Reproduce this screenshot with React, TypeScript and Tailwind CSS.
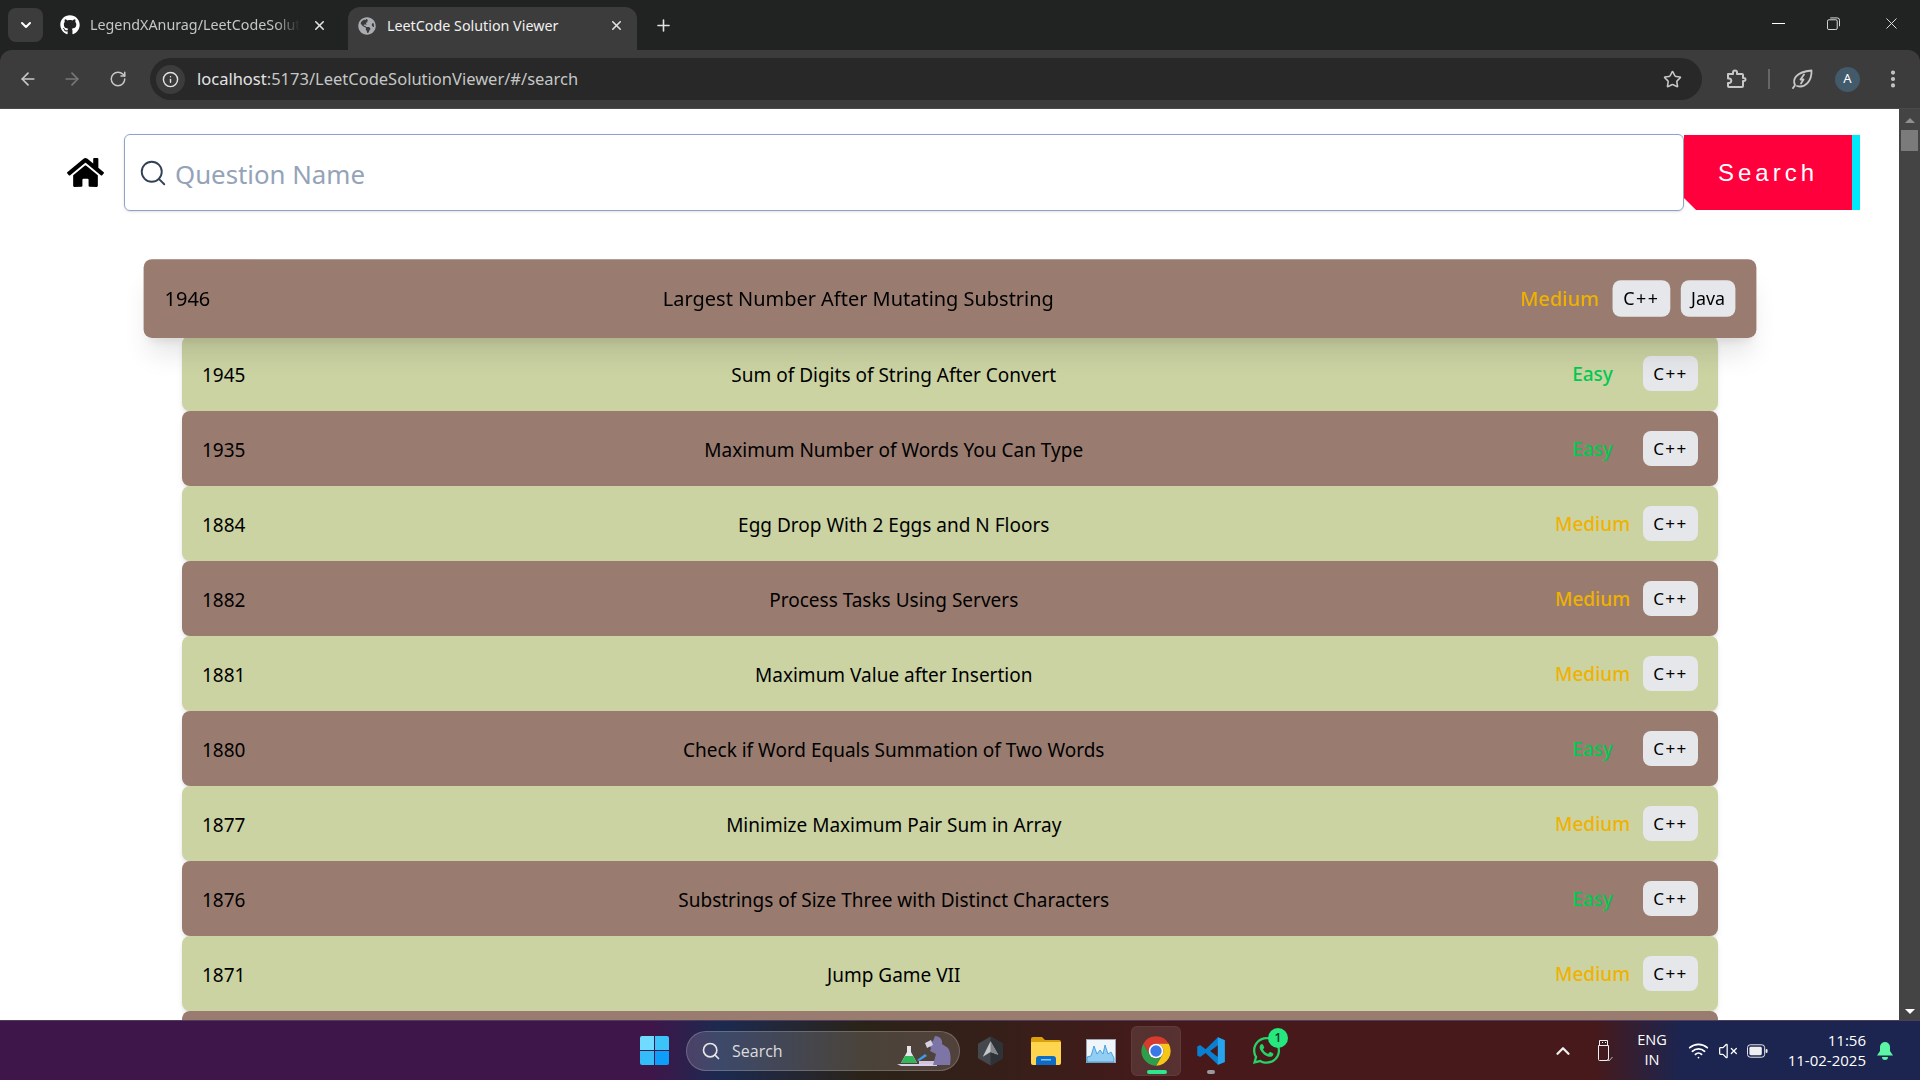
import { FaGithub, FaGlobeAmericas, FaHome, FaWhatsapp } from "react-icons/fa";
import { ArrowLeft, ArrowRight, ChevronDown, ChevronUp, Info, MoreVertical, Plus, RotateCw, Search, Star, VolumeX, Wifi, X } from "lucide-react";

const questions = [
  { id: "1945", title: "Sum of Digits of String After Convert", level: "Easy" },
  { id: "1935", title: "Maximum Number of Words You Can Type", level: "Easy" },
  { id: "1884", title: "Egg Drop With 2 Eggs and N Floors", level: "Medium" },
  { id: "1882", title: "Process Tasks Using Servers", level: "Medium" },
  { id: "1881", title: "Maximum Value after Insertion", level: "Medium" },
  { id: "1880", title: "Check if Word Equals Summation of Two Words", level: "Easy" },
  { id: "1877", title: "Minimize Maximum Pair Sum in Array", level: "Medium" },
  { id: "1876", title: "Substrings of Size Three with Distinct Characters", level: "Easy" },
  { id: "1871", title: "Jump Game VII", level: "Medium" },
];

function CppButton() {
  return (
    <span className="flex h-[35px] w-[55px] items-center justify-center rounded-lg bg-gray-200 text-[17px] tracking-[1.5px] text-black">
      C++
    </span>
  );
}

function JavaButton() {
  return (
    <span className="flex h-[35px] w-[52px] items-center justify-center rounded-lg bg-gray-200 text-[17px] text-black">
      Java
    </span>
  );
}

function Level({ level }: { level: string }) {
  return (
    <span className={`w-[75px] pt-[2px] text-center font-medium ${level === "Easy" ? "text-green-500" : "text-yellow-500"}`}>
      {level}
    </span>
  );
}

function Tabs() {
  return (
    <div className="flex h-[50px] shrink-0 items-end bg-[#212322] text-[14.3px]">
      <div className="mb-[8px] ml-[8px] flex h-[34px] w-[35px] items-center justify-center rounded-lg bg-[#3c3c3c] text-white">
        <ChevronDown size={16} strokeWidth={3} />
      </div>
      <div className="mb-[7px] ml-[17px] flex h-[36px] w-[288px] items-center">
        <FaGithub size={20} className="text-white" />
        <span className="ml-[10px] w-[210px] whitespace-nowrap text-[#c4c7c5] [mask-image:linear-gradient(90deg,#000_88%,transparent)]">LegendXAnurag/LeetCodeSolut</span>
        <X size={15} strokeWidth={2.5} className="ml-[12px] text-[#e3e3e3]" />
      </div>
      <div className="flex h-[43px] w-[289px] items-center rounded-t-xl bg-[#3c3c3c] pb-[6px] pl-[10px]">
        <FaGlobeAmericas size={18} className="text-[#a9adb2]" />
        <span className="ml-[11px] w-[222px] text-[#f0f0f0]">LeetCode Solution Viewer</span>
        <X size={15} strokeWidth={2.5} className="text-[#e3e3e3]" />
      </div>
      <Plus size={19} strokeWidth={2} className="mb-[15px] ml-[17px] text-[#e3e3e3]" />
      <div className="mb-[17px] ml-auto flex items-center pr-[19px] text-[#e8e8e8]">
        <div className="h-px w-[13px] bg-white" />
        <svg viewBox="0 0 14 14" className="ml-[42px] h-[13px] w-[13px]" fill="none" stroke="currentColor" strokeWidth="1">
          <rect x="0.5" y="3" width="10.5" height="10.5" rx="1.5" />
          <path d="M3.5 1h7.5a2.5 2.5 0 0 1 2.5 2.5V10" />
        </svg>
        <X size={19} strokeWidth={1.2} className="ml-[42px]" />
      </div>
    </div>
  );
}

function Toolbar() {
  return (
    <div className="h-[59px] shrink-0 bg-[#212322]">
      <div className="flex h-[59px] items-center rounded-t-xl border-b border-[#4a4a4a] bg-[#3c3c3c] text-[#c7c7c7]">
        <ArrowLeft size={20} className="ml-[18px]" />
        <ArrowRight size={20} className="ml-[24px] text-[#777777]" />
        <RotateCw size={18} className="ml-[27px]" />
        <div className="ml-[23px] flex h-[42px] w-[1552px] items-center rounded-full bg-[#282828] pl-[6px]">
          <div className="flex h-[29px] w-[29px] items-center justify-center rounded-full bg-[#3c3c3c] text-[#e3e3e3]">
            <Info size={17} />
          </div>
          <span className="ml-[12px] text-[16.5px] text-[#e3e3e3]">
            localhost<span className="text-[#c4c7c5]">:5173/LeetCodeSolutionViewer/#/search</span>
          </span>
          <Star size={19} strokeWidth={2} className="ml-auto mr-[20px]" />
        </div>
        <svg viewBox="0 0 24 24" className="ml-[22px] h-[24px] w-[24px]" fill="none" stroke="currentColor" strokeWidth="2" strokeLinejoin="round">
          <path d="M4 7h5V5.5a2 2 0 0 1 4 0V7h5a1 1 0 0 1 1 1v3h1a1.500 1.500 0 0 1 0 3h-1v5a1 1 0 0 1-1 1H5a1 1 0 0 1-1-1v-3h1.500a2.300 2.300 0 0 0 0-4.500H4z" />
        </svg>
        <div className="ml-[20px] h-[20px] w-[2px] bg-[#666666]" />
        <svg viewBox="0 0 24 24" className="ml-[20px] h-[24px] w-[24px]" fill="none" stroke="currentColor" strokeWidth="1.800" strokeLinejoin="round" strokeLinecap="round">
          <path d="M3 21c1-1 1.500-2 2-3C2.500 13 5 5 21.500 3.500 22 14 15 21.500 7 19" />
          <path d="M14 7.500l-3.500 5h3l-2.500 4" />
        </svg>
        <div className="ml-[21px] flex h-[25px] w-[25px] items-center justify-center rounded-full bg-[#435a6b] text-[13px] text-white">A</div>
        <MoreVertical size={22} strokeWidth={2.500} className="ml-[22px]" />
      </div>
    </div>
  );
}

function Scrollbar() {
  return (
    <div className="flex w-[21px] shrink-0 flex-col items-center bg-[#444444]">
      <div className="mt-[9px] h-0 w-0 border-x-[5px] border-b-[5px] border-x-transparent border-b-[#8f8f8f]" />
      <div className="mt-[7px] h-[21px] w-[17px] bg-[#7b7b7b]" />
      <div className="mb-[6px] mt-auto h-0 w-0 border-x-[5px] border-t-[5px] border-x-transparent border-t-white" />
    </div>
  );
}

function Taskbar() {
  return (
    <div className="flex h-[60px] shrink-0 items-center border-t border-[#4d3f5c] bg-[linear-gradient(90deg,#3e164a_0%,#3e164a_34%,#1c2a50_37.500%,#2b2318_45%,#47191a_62%,#47191a_83%,#1c2550_87.500%,#1c2550_100%)] font-['Open_Sans',sans-serif] text-white">
      {/* windows logo */}
      <div className="ml-[640px] grid h-[29px] w-[29px] grid-cols-2 gap-[1px]">
        <div className="rounded-tl-[2px] bg-[#6fdcff]" />
        <div className="rounded-tr-[2px] bg-[#3cc4f8]" />
        <div className="rounded-bl-[2px] bg-[#34bdf8]" />
        <div className="rounded-br-[2px] bg-[#0f9dfa]" />
      </div>
      {/* search pill */}
      <div className="ml-[17px] flex h-[40px] w-[274px] items-center overflow-hidden rounded-full border border-white/20 bg-white/15 pl-[14px]">
        <Search size={20} strokeWidth={2} className="text-[#e6e6e6]" />
        <span className="ml-[11px] text-[16px] text-[#dcdcdc]">Search</span>
        <svg viewBox="0 0 62 32" className="ml-auto mr-[2px] h-[32px] w-[62px]">
          <path d="M2 29h40v2H6z" fill="#d8d0e4" />
          <path d="M12 11h4v6l6 11H6l6-11z" fill="#e5e7eb" />
          <path d="M10 21h8l4 7H6z" fill="#31b85a" />
          <path d="M22 25l8-6 2 2-8 5z" fill="#3a9ee8" />
          <path d="M24 26h18v3H24z" fill="#cfc6dc" />
          <path d="M40 1c5 0 8 4 7 8l6 4c3 4 3 12 2 17H38l3-11-6-3 1-3-3-4 5-3z" fill="#7d75a6" />
          <path d="M30 8l6-3 2 5-6 3z" fill="#d6d0e2" />
        </svg>
      </div>
      {/* hex app */}
      <svg viewBox="0 0 28 30" className="ml-[17px] h-[30px] w-[27px]">
        <path d="M14 0l13 7.500v15L14 30 1 22.500v-15z" fill="#44474c" />
        <path d="M14 0l13 7.500v15L14 30z" fill="#2f3236" />
        <path d="M14 5l8 14-8-3-8 5z" fill="#c4c8cd" />
        <path d="M14 5l8 14-8-3z" fill="#85878c" />
      </svg>
      {/* explorer */}
      <svg viewBox="0 0 30 28" className="ml-[27px] h-[28px] w-[30px]">
        <path d="M0 2a2 2 0 0 1 2-2h9l3 3h14a2 2 0 0 1 2 2v3H0z" fill="#dba10c" />
        <path d="M0 5h30v21a2 2 0 0 1-2 2H2a2 2 0 0 1-2-2z" fill="#ffd44f" />
        <path d="M5 22a3 3 0 0 1 3-3h14a3 3 0 0 1 3 3v6H5z" fill="#0f6cc4" />
        <path d="M10 22h10v1.500H10z" fill="#7cc7f5" />
      </svg>
      {/* task monitor */}
      <svg viewBox="0 0 30 24" className="ml-[25px] h-[24px] w-[30px]">
        <rect width="30" height="24" fill="#9aa5ad" />
        <rect x="1" y="1" width="28" height="22" fill="#eef6fb" />
        <path d="M1 18l4-1 3-10 3 8 3-4 3 4 2-9 3 9 3-2 3 6v4H1z" fill="#93cdf2" stroke="#2f93d8" strokeWidth="0.800" />
      </svg>
      {/* chrome */}
      <div className="relative ml-[15px] flex h-[50px] w-[50px] items-center justify-center rounded-md border border-white/5 bg-white/10">
        <svg viewBox="0 0 48 48" className="h-[32px] w-[32px]">
          <path d="M24 2A22 22 0 0 1 43.050 13H24A11 11 0 0 0 14.470 29.500L4.950 13A22 22 0 0 1 24 2z" fill="#d93a2e" />
          <path d="M43.050 13A22 22 0 0 1 24 46l9.530-16.500A11 11 0 0 0 24 13z" fill="#f5c518" />
          <path d="M4.950 13l9.520 16.500a11 11 0 0 0 19.060 0L24 46A22 22 0 0 1 4.950 13z" fill="#2f9e4a" />
          <circle cx="24" cy="24" r="11" fill="#fff" />
          <circle cx="24" cy="24" r="8.500" fill="#3b78e7" />
        </svg>
        <div className="absolute bottom-[1px] left-[15px] h-[4px] w-[20px] rounded-full bg-[#2ee68c]" />
      </div>
      {/* vscode */}
      <div className="relative ml-[15px] h-[30px] w-[30px]">
        <svg viewBox="0 0 24 24" className="h-[30px] w-[30px]">
          <path fillRule="evenodd" d="M17.500 1 7.700 10.500 3.300 7.200 1 8.400v7.200l2.300 1.200 4.400-3.300 9.800 9.500 5.500-2.300V3.300zM17.500 7.300 11.300 12l6.200 4.700z" fill="#0a7fd0" />
          <path fillRule="evenodd" d="M17.500 1l5.500 2.300v17.400L17.500 23z" fill="#27a4ee" />
        </svg>
        <div className="absolute left-[11px] top-[34px] h-[4px] w-[8px] rounded-full bg-[#9a9a9a]" />
      </div>
      {/* whatsapp */}
      <div className="relative ml-[25px] h-[31px] w-[31px]">
        <FaWhatsapp size={31} className="text-[#25d366]" />
        <div className="absolute -right-[6px] -top-[7px] flex h-[20px] w-[20px] items-center justify-center rounded-full bg-[#25e87e] text-[12px] font-semibold text-[#10331f]">1</div>
      </div>
      {/* tray */}
      <ChevronUp size={22} strokeWidth={2.500} className="ml-[270px] text-[#f0f0f0]" />
      <svg viewBox="0 0 16 22" className="ml-[23px] h-[22px] w-[16px]" fill="none" stroke="#f0f0f0" strokeWidth="1">
        <path d="M2.500 0.500h8v5h-8zM1.500 5.500h10v14a1 1 0 0 1-1 1h-8a1 1 0 0 1-1-1zM5 2.500h1M8 2.500h1" />
        <path d="M10 19l2 2 3.500-4" stroke="#b8b8b8" />
      </svg>
      <div className="-mt-[2px] ml-[19px] flex w-[40px] flex-col items-center text-[14.500px] leading-[20px]">
        <span>ENG</span>
        <span>IN</span>
      </div>
      <Wifi size={21} strokeWidth={2} className="ml-[16px]" />
      <VolumeX size={20} strokeWidth={1.500} className="ml-[9px]" />
      <svg viewBox="0 0 22 14" className="ml-[9px] h-[14px] w-[21px]" fill="none">
        <rect x="0.500" y="0.500" width="18" height="13" rx="3" stroke="#f0f0f0" />
        <rect x="2.500" y="2.500" width="13" height="9" rx="1.500" fill="#f0f0f0" />
        <rect x="19.500" y="5" width="2" height="4" rx="1" fill="#f0f0f0" />
      </svg>
      <div className="-mt-[2px] ml-auto flex flex-col items-end text-[15px] leading-[20px]">
        <span>11:56</span>
        <span>11-02-2025</span>
      </div>
      <svg viewBox="0 0 16 18" className="ml-[11px] mr-[27px] h-[18px] w-[16px]" fill="#5cf5a5">
        <path d="M8 0a5 5 0 0 1 5 5v4l3 4.500H0L3 9V5a5 5 0 0 1 5-5z" />
        <path d="M5 15h6a3 3 0 0 1-6 0z" />
      </svg>
    </div>
  );
}

export default function App() {
  return (
    <div className="flex h-screen flex-col overflow-hidden bg-white font-['Noto_Sans',sans-serif]">
      <Tabs />
      <Toolbar />
      <div className="flex min-h-0 flex-1">
        <div className="min-w-0 flex-1 overflow-hidden">
          <div className="flex items-center pl-[67px] pr-[39px] pt-[25px]">
            <FaHome size={37} className="shrink-0 text-black" />
            <div className="ml-[20px] flex h-[77px] flex-1 items-center rounded-md border border-[#8fa3c4] pl-[13px] shadow-sm">
              <Search size={30} strokeWidth={1.500} className="text-[#334155]" />
              <span className="ml-[7px] pt-[3px] text-[25.800px] text-[#94a3b8]">Question Name</span>
            </div>
            <div className="flex h-[75px] w-[176px] shrink-0 items-center justify-center border-r-[8px] border-[#00e9fb] bg-[#ff003c] font-['Liberation_Sans',sans-serif] text-2xl tracking-[4px] text-white [clip-path:polygon(0_0,100%_0,100%_100%,12px_100%,0_calc(100%-12px))]">
              Search
            </div>
          </div>

          <div className="mt-[50px] flex flex-col pl-[182px] pr-[181px] text-[19px] text-black">
            <div className="relative z-10 flex h-[75px] scale-105 items-center justify-between rounded-lg bg-[#997c6f] px-[20px] shadow-xl">
              <span className="pt-[2px]">1946</span>
              <span className="pt-[2px]">Largest Number After Mutating Substring</span>
              <div className="flex items-center gap-[13px] pl-[13px]">
                <Level level="Medium" />
                <div className="flex gap-[10px]">
                  <CppButton />
                  <JavaButton />
                </div>
              </div>
            </div>
            {questions.map((q, i) => (
              <div
                key={q.id}
                className={`flex h-[75px] shrink-0 items-center justify-between rounded-lg px-[20px] shadow-md ${i % 2 === 0 ? "bg-[#cbd3a3]" : "bg-[#997c6f]"}`}
              >
                <span className="pt-[3px]">{q.id}</span>
                <span className="pt-[3px]">{q.title}</span>
                <div className="flex items-center gap-[13px] pl-[13px]">
                  <Level level={q.level} />
                  <CppButton />
                </div>
              </div>
            ))}
            <div className="h-[75px] shrink-0 rounded-lg bg-[#997c6f]" />
          </div>
        </div>
        <Scrollbar />
      </div>
      <Taskbar />
    </div>
  );
}
